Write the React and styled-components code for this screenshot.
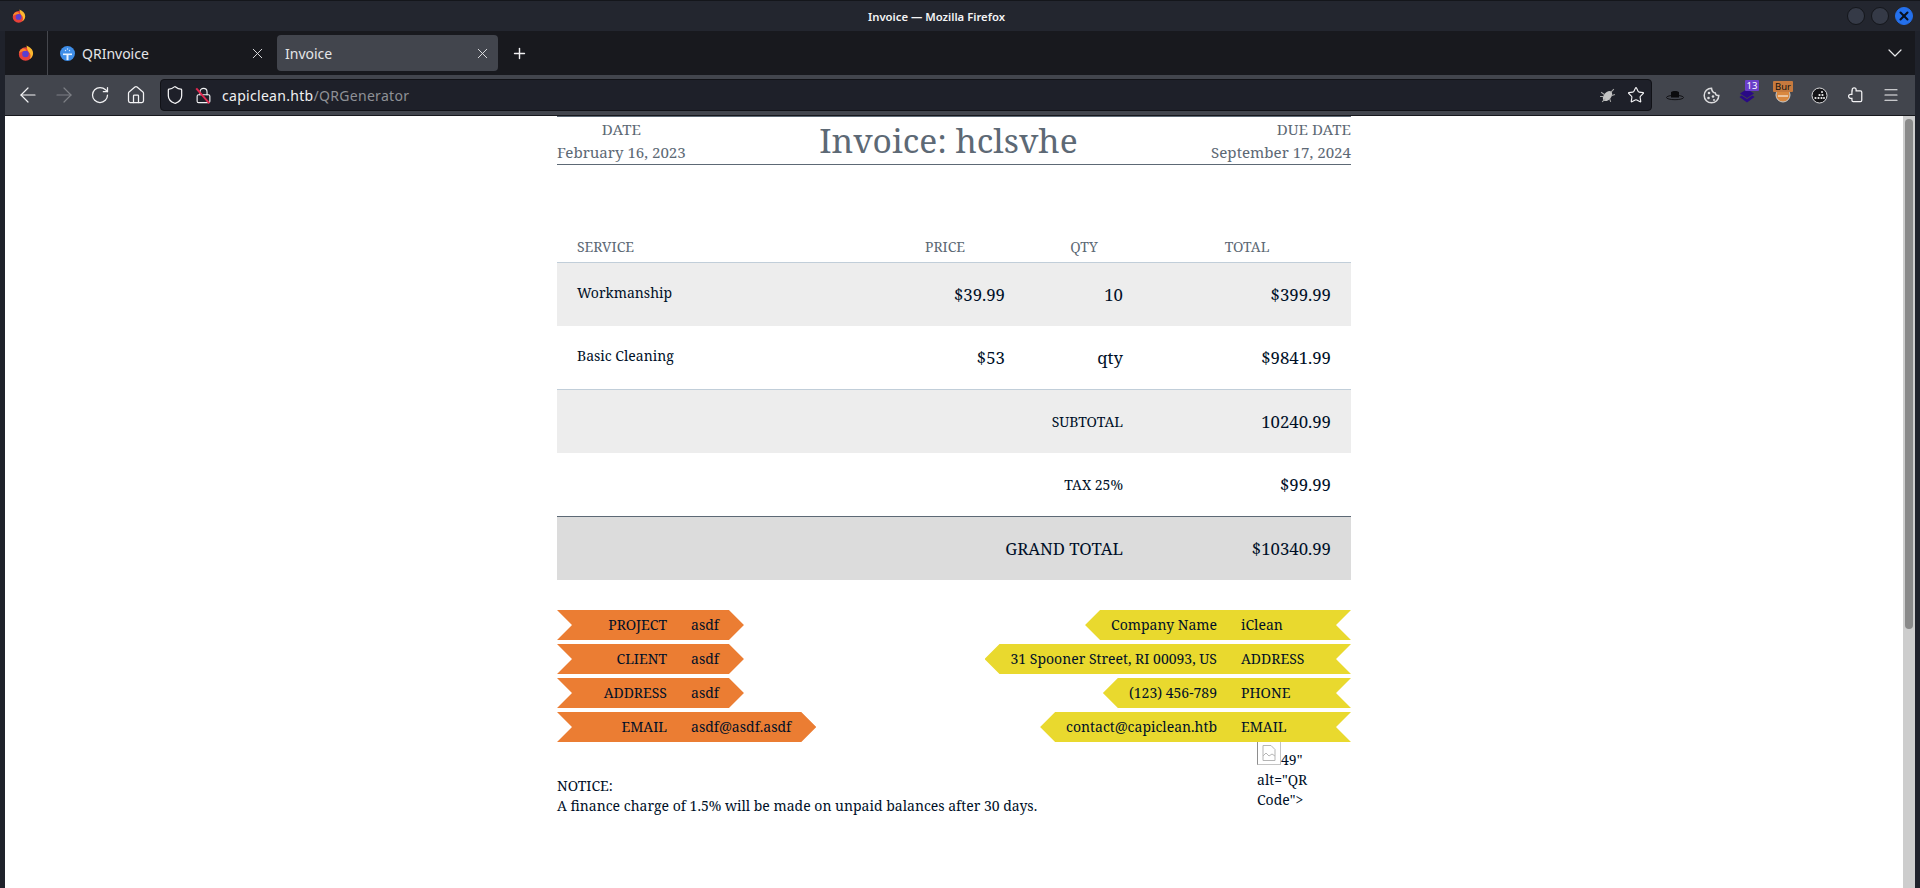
import React from "react";
import styled, { createGlobalStyle } from "styled-components";
import { ArrowLeft, ArrowRight, RotateCw, House, Shield, Lock, Star, Menu, X, Plus, ChevronDown } from "lucide-react";

const Global = createGlobalStyle`
  html, body { margin: 0; padding: 0; height: 100%; overflow: hidden; background: #23262f; }
  #root { height: 100%; }
  * { box-sizing: border-box; }
`;

const Win = styled.div`
  width: 1920px; height: 888px; display: flex; flex-direction: column;
  font-family: "Noto Sans", sans-serif; background: #1f222b; padding: 0 5px; overflow: hidden;
`;
const Title = styled.div`
  height: 31px; flex: none; margin: 0 -5px; padding: 0 7px 0 12px; display: flex; align-items: center; justify-content: space-between;
  background: #23262f; color: #f4f4f5; font-size: 11.3px; font-weight: 600; border-top: 1px solid #14161b;
`;
const TitleText = styled.span` flex: 1; text-align: center; `;
const Ctrls = styled.div` display: flex; gap: 6px; align-items: center; `;
const Ctrl = styled.span`
  width: 18px; height: 18px; border-radius: 50%; background: ${p => p.$on ? "#2470ec" : "#353a47"};
  border: 1px solid ${p => p.$on ? "#2470ec" : "#14161b"}; display: flex; align-items: center; justify-content: center; color: #08101f;
`;
const Tabs = styled.div`
  height: 44px; flex: none; background: #18191e; display: flex; align-items: center; color: #e5e6e8; font-size: 14px;
`;
const FoxCell = styled.div`
  width: 43px; height: 44px; display: flex; align-items: center; justify-content: center; border-right: 1px solid #45474d; flex: none;
`;
const Tab = styled.div`
  width: ${p => p.$w}px; height: 36px; padding: 0 ${p => p.$pr}px 0 ${p => p.$pl}px; border-radius: 4px; display: flex; align-items: center; gap: 7px; flex: none;
  background: ${p => p.$active ? "#42454d" : "transparent"};
`;
const TabLabel = styled.span` flex: 1; `;
const NewTab = styled.span` margin-left: 13px; display: flex; color: #f0f0f2; `;
const TabEnd = styled.span` margin-left: auto; padding-right: 8px; display: flex; color: #e8e8ea; `;
const Tool = styled.div`
  height: 41px; flex: none; background: #42454d; display: flex; align-items: center; color: #f3f3f5; border-bottom: 1px solid #17181d; padding-left: 5px;
`;
const NavBtn = styled.span` width: 36px; display: flex; justify-content: center; flex: none; color: ${p => p.$dim ? "#7d7f85" : "#f3f3f5"}; `;
const Url = styled.div`
  width: 1492px; height: 32px; margin-left: 6px; background: #1e2029; border: 1px solid #111217; border-radius: 4px; display: flex; align-items: center; padding: 0 6px 0 4px; flex: none; font-size: 14px; letter-spacing: .3px;
`;
const LockWrap = styled.span` position: relative; display: flex; margin: 0 10px 0 10px; `;
const LockSlash = styled.span`
  position: absolute; left: -2px; top: 8px; width: 20px; height: 1.5px; background: #e22850; transform: rotate(49deg);
`;
const Host = styled.span` color: #f0f0f2; `;
const Path = styled.span` color: #8f9196; `;
const UrlEnd = styled.span` margin-left: auto; display: flex; align-items: center; gap: 11px; `;
const Addons = styled.div` display: flex; align-items: center; flex: none; padding-left: 5px; `;
const Addon = styled.span` position: relative; display: flex; width: 36px; justify-content: center; `;
const Badge = styled.span`
  position: absolute; left: ${p => p.$l}px; top: -6px; width: ${p => p.$w}px; text-align: center; height: 11px; background: ${p => p.$bg}; color: ${p => p.$c}; font-size: 9.5px; line-height: 11px; border-radius: 1px; white-space: nowrap;
`;
const Body = styled.div`
  flex: 1; min-height: 0; background: #fff; display: flex; position: relative;
`;
const PageScroll = styled.div` flex: 1; display: flex; justify-content: center; `;
const Bar = styled.div`
  width: 12px; flex: none; background: #cdcdcd; padding: 3px 2px 0;
`;
const Thumb = styled.div` height: 510px; background: #8a8a8a; border-radius: 4px; `;
const Sheet = styled.div`
  width: 794px; font-family: "Noto Serif", "DejaVu Serif", serif; color: #001028; font-size: 14px;
`;
const Head = styled.header`
  height: 49px; border-top: 1px solid #5d6975; border-bottom: 1px solid #5d6975; display: flex; justify-content: space-between; color: #5d6975; font-size: 15.1px;
`;
const DateCol = styled.div` flex: none; `;
const DateLabel = styled.div` line-height: 24px; text-align: ${p => p.$right ? "right" : "center"}; `;
const DateVal = styled.div` line-height: 22px; white-space: nowrap; `;
const H1 = styled.h1` margin: 0; font-weight: 400; font-size: 33.6px; line-height: 47px; white-space: nowrap; `;
const Table = styled.div` margin-top: 56px; `;
const Row = styled.div`
  height: ${p => p.$h || 63}px; display: grid; grid-template-columns: 308px 160px 118px 208px; align-items: center;
  background: ${p => p.$bg || "#fff"};
  padding-top: ${p => p.$pt || 0}px;
  border-top: ${p => p.$line ? `1px solid ${p.$line}` : "0"};
`;
const Th = styled.div` color: #5d6975; text-align: ${p => p.$first ? "left" : "center"}; padding-left: ${p => p.$first ? 20 : 0}px; `;
const Name = styled.div` padding-left: 20px; margin-top: -5px; `;
const Num = styled.div` text-align: right; font-size: 16.8px; padding-right: 20px; `;
const Sum = styled.div` grid-column: 1 / 4; text-align: right; padding-right: 20px; font-size: ${p => p.$big ? 16.8 : 14}px; `;
const Blocks = styled.div` margin-top: 30px; display: flex; justify-content: space-between; `;
const Stack = styled.div` display: flex; flex-direction: column; gap: 4px; align-items: ${p => p.$right ? "flex-end" : "flex-start"}; `;
const Ribbon = styled.div`
  height: 30px; display: flex; align-items: center; white-space: nowrap; background: ${p => p.$bg};
  clip-path: ${p => p.$right
    ? "polygon(15px 0, 100% 0, calc(100% - 15px) 50%, 100% 100%, 15px 100%, 0 50%)"
    : "polygon(0 0, calc(100% - 15px) 0, 100% 50%, calc(100% - 15px) 100%, 0 100%, 15px 50%)"};
  padding: ${p => p.$right ? "0 0 2px 26px" : "0 25px 2px 0"};
`;
const RibbonLabel = styled.span` width: 110px; text-align: right; margin-right: 24px; flex: none; `;
const RibbonText = styled.span` margin-right: 24px; `;
const RibbonEnd = styled.span` width: 110px; flex: none; `;
const Foot = styled.div` display: flex; justify-content: space-between; line-height: 20px; `;
const Notice = styled.div` margin-top: 34px; `;
const Broken = styled.div` width: 70px; margin-right: 24px; margin-top: -1px; `;
const BrokenIcon = styled.span`
  display: inline-block; overflow: hidden; width: 24px; height: 24px; padding: 3px 0 0 4px; border: 1px solid #8e8e8e; border-right-color: #c4c4c4; border-bottom-color: #c4c4c4;
`;

const Fox = ({ s = 16 }) => (
  <svg width={s} height={s} viewBox="0 0 16 16">
    <circle cx="7.600" cy="9" r="6.800" fill="#e8413a" />
    <path d="M8.500.6c3.800 1.600 6.600 4.200 6.600 7.600 0 2.600-1.400 4.600-3.400 5.800 1.400-2.600 1-5.200-.8-6.800C9.700 6 8.800 3.500 8.500.6Z" fill="#fcb82f" />
    <circle cx="7.500" cy="9" r="3.300" fill="#5a3fd0" />
    <path d="M1 8c.8-3 2.600-4.300 4.800-4.500 1.800.4 2.400 1.400 2.600 2.300C5 5.400 3.400 7 1 8Z" fill="#f98a2a" />
  </svg>
);

const SiteIcon = () => (
  <svg width="15" height="15" viewBox="0 0 15 15" style={{ flex: "none" }}>
    <circle cx="7.500" cy="7.500" r="7.500" fill="#3f8ee8" />
    <rect x="3" y="7.500" width="9" height="1.600" fill="#e8f2fd" />
    <rect x="6.500" y="9" width="2" height="5" fill="#e8f2fd" />
    <circle cx="5.500" cy="4.500" r=".7" fill="#cfe3fa" /><circle cx="9.500" cy="4.500" r=".7" fill="#cfe3fa" /><circle cx="7.500" cy="3" r=".7" fill="#cfe3fa" />
  </svg>
);

const left = [["PROJECT","asdf"],["CLIENT","asdf"],["ADDRESS","asdf"],["EMAIL","asdf@asdf.asdf"]];
const right = [["Company Name","iClean"],["31 Spooner Street, RI 00093, US","ADDRESS"],["(123) 456-789","PHONE"],["contact@capiclean.htb","EMAIL"]];

export default function App() {
  return (
    <Win>
      <Global />
      <Title>
        <Fox s={14} />
        <TitleText>Invoice — Mozilla Firefox</TitleText>
        <Ctrls>
          <Ctrl /><Ctrl />
          <Ctrl $on><X size={14} strokeWidth={3.5} /></Ctrl>
        </Ctrls>
      </Title>
      <Tabs>
        <FoxCell><Fox /></FoxCell>
        <Tab $w={229} $pl={12} $pr={11}>
          <SiteIcon />
          <TabLabel>QRInvoice</TabLabel>
          <X size={17} strokeWidth={1.3} />
        </Tab>
        <Tab $w={221} $pl={8} $pr={7} $active>
          <TabLabel>Invoice</TabLabel>
          <X size={17} strokeWidth={1.3} />
        </Tab>
        <NewTab><Plus size={17} /></NewTab>
        <TabEnd><ChevronDown size={24} strokeWidth={1.2} /></TabEnd>
      </Tabs>
      <Tool>
        <NavBtn><ArrowLeft size={24} strokeWidth={1.2} /></NavBtn>
        <NavBtn $dim><ArrowRight size={24} strokeWidth={1.2} /></NavBtn>
        <NavBtn><RotateCw size={20} strokeWidth={1.5} /></NavBtn>
        <NavBtn><House size={20} strokeWidth={1.5} /></NavBtn>
        <Url>
          <Shield size={20} strokeWidth={1.5} />
          <LockWrap><Lock size={17} strokeWidth={1.6} /><LockSlash /></LockWrap>
          <Host>capiclean.htb</Host><Path>/QRGenerator</Path>
          <UrlEnd>
            <svg width="17" height="17" viewBox="0 0 16 16"><ellipse cx="8" cy="8.500" rx="3.500" ry="5.500" transform="rotate(40 8 8.500)" fill="#c4c4c4" /><path d="M2 5l3 2M1 9h3M3 14l3-3M14 2l-3 3M15 7l-3 1M11 14l-1-3" stroke="#a9a9a9" /></svg>
            <Star size={18} strokeWidth={1.5} />
          </UrlEnd>
        </Url>
        <Addons>
          <Addon><svg width="18" height="12" viewBox="0 0 18 12"><ellipse cx="9" cy="8.500" rx="8.500" ry="2.200" fill="none" stroke="#111114" strokeWidth="1" /><path d="M5 8.500V3C6.500 1.500 11.500 1.500 13 3V8.500Z" fill="#0b0b0d" /></svg></Addon>
          <Addon><svg width="17" height="17" viewBox="0 0 17 17"><path d="M8.500 1.200a7.300 7.300 0 1 0 7.300 7.300c-2 .2-3.300-.8-3.500-2.500-1.800 0-3.400-1.500-3.800-4.800Z" fill="none" stroke="#dcdcde" strokeWidth="1.500" /><circle cx="6" cy="6" r="1.300" fill="#dcdcde" /><circle cx="5.500" cy="11" r="1.300" fill="#dcdcde" /><circle cx="10" cy="9.500" r="1.300" fill="#dcdcde" /><circle cx="11" cy="13" r="1" fill="#dcdcde" /></svg></Addon>
          <Addon>
            <svg width="18" height="18" viewBox="0 0 18 18"><path d="M9 3l7 4.500-7 4.500-7-4.500Z" fill="#2a0a86" /><path d="M1.500 11l2-1.400L9 13l5.500-3.400 2 1.400L9 16.500Z" fill="#2a0a86" /></svg>
            <Badge $l={16} $w={14} $bg="#6a3fc9" $c="#fff">13</Badge>
          </Addon>
          <Addon>
            <svg width="16" height="16" viewBox="0 0 16 16"><circle cx="8" cy="8" r="7" fill="#d9883f" stroke="#c9c9c9" /><path d="M3 9h10" stroke="#fff" /></svg>
            <Badge $l={8} $w={20} $bg="#c67a3e" $c="#111">Bur</Badge>
          </Addon>
          <Addon><svg width="17" height="17" viewBox="0 0 17 17"><circle cx="8.500" cy="8.500" r="7.500" fill="#131316" stroke="#d8d8da" /><g fill="#eee"><circle cx="4.500" cy="11" r="1.100" /><circle cx="7.500" cy="11" r="1.100" /><circle cx="10.500" cy="11" r="1.100" /><circle cx="13" cy="11" r="1" /><circle cx="8.500" cy="8" r="1.100" /><circle cx="11.500" cy="8" r="1.100" /><circle cx="11" cy="5" r="1" /></g></svg></Addon>
          <Addon><svg width="17" height="18" viewBox="0 0 19 19" fill="none" stroke="#f3f3f5" strokeWidth="1.400"><path d="M5.500 13.200H4a2.200 2.200 0 0 1 0-4.400h1.500V5H5.800V3.700a2.200 2.200 0 0 1 4.400 0V5H15a1.500 1.500 0 0 1 1.500 1.500V15.500a1.500 1.500 0 0 1-1.500 1.500H7a1.500 1.500 0 0 1-1.500-1.500Z" /></svg></Addon>
          <Addon><Menu size={18} strokeWidth={1.6} /></Addon>
        </Addons>
      </Tool>
      <Body>
        <PageScroll>
          <Sheet>
            <Head>
              <DateCol><DateLabel>DATE</DateLabel><DateVal>February 16, 2023</DateVal></DateCol>
              <H1>Invoice: hclsvhe</H1>
              <DateCol><DateLabel $right>DUE DATE</DateLabel><DateVal>September 17, 2024</DateVal></DateCol>
            </Head>
            <Table>
              <Row $h={41} $pt={9}>
                <Th $first>SERVICE</Th><Th>PRICE</Th><Th>QTY</Th><Th>TOTAL</Th>
              </Row>
              <Row $bg="#ededed" $line="#c1ced9" $h={64}><Name>Workmanship</Name><Num>$39.99</Num><Num>10</Num><Num>$399.99</Num></Row>
              <Row><Name>Basic Cleaning</Name><Num>$53</Num><Num>qty</Num><Num>$9841.99</Num></Row>
              <Row $bg="#ededed" $line="#c1ced9" $h={64}><Sum>SUBTOTAL</Sum><Num>10240.99</Num></Row>
              <Row><Sum>TAX 25%</Sum><Num>$99.99</Num></Row>
              <Row $bg="#dcdcdc" $line="#5d6975" $h={64}><Sum $big>GRAND TOTAL</Sum><Num>$10340.99</Num></Row>
            </Table>
            <Blocks>
              <Stack>
                {left.map(([a, b]) => (
                  <Ribbon key={a} $bg="#eb7d33"><RibbonLabel>{a}</RibbonLabel><span>{b}</span></Ribbon>
                ))}
              </Stack>
              <Stack $right>
                {right.map(([a, b]) => (
                  <Ribbon key={b} $bg="#e9d92e" $right><RibbonText>{a}</RibbonText><RibbonEnd>{b}</RibbonEnd></Ribbon>
                ))}
              </Stack>
            </Blocks>
            <Foot>
              <Notice>NOTICE:<br />A finance charge of 1.5% will be made on unpaid balances after 30 days.</Notice>
              <Broken>
                <BrokenIcon>
                  <svg width="14" height="16" viewBox="0 0 14 16" fill="none" stroke="#b5b5b5"><path d="M1 .5h8l4 4v11H1Z" /><path d="M1 11l3-3 3 3 3-2 3 2" /></svg>
                </BrokenIcon>49" alt="QR Code"&gt;
              </Broken>
            </Foot>
          </Sheet>
        </PageScroll>
        <Bar><Thumb /></Bar>
      </Body>
    </Win>
  );
}
